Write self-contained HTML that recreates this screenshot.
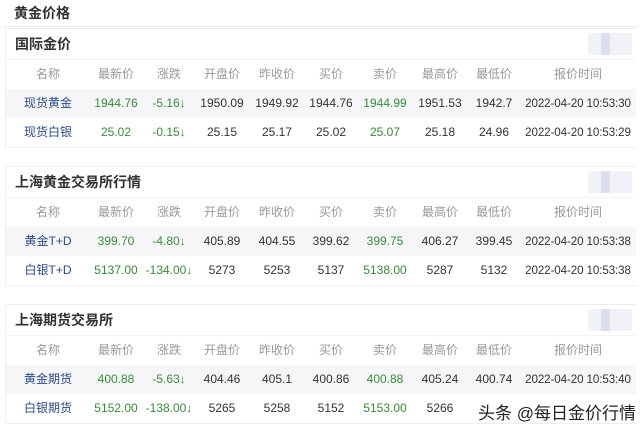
<!DOCTYPE html><html><head><meta charset="utf-8"><style>
body{margin:0;width:640px;height:433px;background:#fff;overflow:hidden;position:relative;font-family:"Liberation Sans","Noto Sans CJK SC",sans-serif;}
.t{position:absolute;left:14px;top:3px;font-size:14px;font-weight:bold;color:#333;}
.card{position:absolute;left:5px;width:630px;border:1px solid #eee;border-right:none;background:#fff;}
.h{height:30px;line-height:30px;padding-left:9px;font-size:14px;font-weight:bold;color:#333;border-bottom:1px solid #f2f2f2;position:relative}
.blur{position:absolute;right:4px;top:4px;width:44px;height:22px;background:linear-gradient(90deg,#eef0f6 0,#eef0f6 30%,#d8dcec 30%,#d8dcec 50%,#eef0f6 50%);opacity:.9}
.r{height:29px;position:relative;font-size:12px;}
.r span{position:absolute;top:0;line-height:29px;transform:translateX(-50%);white-space:nowrap;color:#333}
.r span.tm{font-size:11.6px;letter-spacing:-0.1px}
.hd span{color:#999}
.g{background:#f6f6f8}
.r span.n{color:#2a4a8a}
.r span.gr{color:#3a8a3a}
</style></head><body>
<div class="t">黄金价格</div>
<div style="position:absolute;left:0;top:26px;width:640px;height:1px;background:#f0f0f0"></div>

<div class="card" style="top:28px">
<div class="h">国际金价<div class="blur"></div></div>
<div class="r hd"><span style="left:42px">名称</span><span style="left:110px">最新价</span><span style="left:163px">涨跌</span><span style="left:216px">开盘价</span><span style="left:271px">昨收价</span><span style="left:325px">买价</span><span style="left:379px">卖价</span><span style="left:434px">最高价</span><span style="left:488px">最低价</span><span style="left:572px">报价时间</span></div>
<div class="r g"><span class="n" style="left:42px">现货黄金</span><span class="gr" style="left:110px">1944.76</span><span class="gr" style="left:163px">-5.16↓</span><span style="left:216px">1950.09</span><span style="left:271px">1949.92</span><span style="left:325px">1944.76</span><span class="gr" style="left:379px">1944.99</span><span style="left:434px">1951.53</span><span style="left:488px">1942.7</span><span class="tm" style="left:572px">2022-04-20 10:53:30</span></div>
<div class="r"><span class="n" style="left:42px">现货白银</span><span class="gr" style="left:110px">25.02</span><span class="gr" style="left:163px">-0.15↓</span><span style="left:216px">25.15</span><span style="left:271px">25.17</span><span style="left:325px">25.02</span><span class="gr" style="left:379px">25.07</span><span style="left:434px">25.18</span><span style="left:488px">24.96</span><span class="tm" style="left:572px">2022-04-20 10:53:29</span></div>
</div>

<div class="card" style="top:166px">
<div class="h">上海黄金交易所行情<div class="blur"></div></div>
<div class="r hd"><span style="left:42px">名称</span><span style="left:110px">最新价</span><span style="left:163px">涨跌</span><span style="left:216px">开盘价</span><span style="left:271px">昨收价</span><span style="left:325px">买价</span><span style="left:379px">卖价</span><span style="left:434px">最高价</span><span style="left:488px">最低价</span><span style="left:572px">报价时间</span></div>
<div class="r g"><span class="n" style="left:42px">黄金T+D</span><span class="gr" style="left:110px">399.70</span><span class="gr" style="left:163px">-4.80↓</span><span style="left:216px">405.89</span><span style="left:271px">404.55</span><span style="left:325px">399.62</span><span class="gr" style="left:379px">399.75</span><span style="left:434px">406.27</span><span style="left:488px">399.45</span><span class="tm" style="left:572px">2022-04-20 10:53:38</span></div>
<div class="r"><span class="n" style="left:42px">白银T+D</span><span class="gr" style="left:110px">5137.00</span><span class="gr" style="left:163px">-134.00↓</span><span style="left:216px">5273</span><span style="left:271px">5253</span><span style="left:325px">5137</span><span class="gr" style="left:379px">5138.00</span><span style="left:434px">5287</span><span style="left:488px">5132</span><span class="tm" style="left:572px">2022-04-20 10:53:38</span></div>
</div>

<div class="card" style="top:304px">
<div class="h">上海期货交易所<div class="blur"></div></div>
<div class="r hd"><span style="left:42px">名称</span><span style="left:110px">最新价</span><span style="left:163px">涨跌</span><span style="left:216px">开盘价</span><span style="left:271px">昨收价</span><span style="left:325px">买价</span><span style="left:379px">卖价</span><span style="left:434px">最高价</span><span style="left:488px">最低价</span><span style="left:572px">报价时间</span></div>
<div class="r g"><span class="n" style="left:42px">黄金期货</span><span class="gr" style="left:110px">400.88</span><span class="gr" style="left:163px">-5.63↓</span><span style="left:216px">404.46</span><span style="left:271px">405.1</span><span style="left:325px">400.86</span><span class="gr" style="left:379px">400.88</span><span style="left:434px">405.24</span><span style="left:488px">400.74</span><span class="tm" style="left:572px">2022-04-20 10:53:40</span></div>
<div class="r"><span class="n" style="left:42px">白银期货</span><span class="gr" style="left:110px">5152.00</span><span class="gr" style="left:163px">-138.00↓</span><span style="left:216px">5265</span><span style="left:271px">5258</span><span style="left:325px">5152</span><span class="gr" style="left:379px">5153.00</span><span style="left:434px">5266</span></div>
</div>
<div style="position:absolute;left:478px;top:399px;font-size:17px;color:#222;text-shadow:0 0 2px #fff,0 0 2px #fff">头条 @每日金价行情</div>
</body></html>
